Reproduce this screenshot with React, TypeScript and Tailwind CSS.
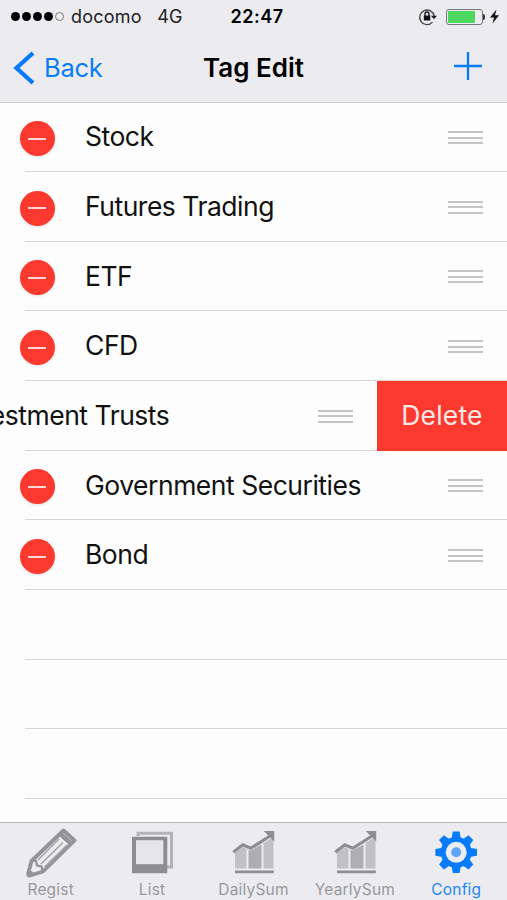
import React from 'react';
import clsx from 'clsx';

const tags = [
  { name: 'Stock' },
  { name: 'Futures Trading' },
  { name: 'ETF' },
  { name: 'CFD' },
  { name: 'Investment Trusts', swiped: true },
  { name: 'Government Securities' },
  { name: 'Bond' },
];

const tabs = [
  { label: 'Regist', icon: PencilIcon },
  { label: 'List', icon: PhotosIcon },
  { label: 'DailySum', icon: ChartIcon },
  { label: 'YearlySum', icon: ChartIcon },
  { label: 'Config', icon: GearIcon, active: true },
];

function PencilIcon() {
  return (
    <svg viewBox="0 0 52 52" className="w-[52px] h-[52px]" fill="none">
      <path d="M38.500 3.500 49.500 13.500 18 44.500 5 48.500Q3 49 3.200 46.500L6.500 34Z" fill="#ededf0" stroke="#949496" strokeWidth="3.800" strokeLinejoin="round" />
      <path d="m35.500 7 11 10" stroke="#949496" strokeWidth="4.500" />
      <path d="m7.500 33 3.500 1 1 4.500 4.500 1 1 4.500" stroke="#949496" strokeWidth="2.200" />
      <path d="M13 33 34 12M16 37 38 15.500M19.500 40 42 18" stroke="#a6a6a8" strokeWidth="1.600" />
      <path d="m4 42 7 6-6 2q-3 0-2.500-3z" fill="#949496" />
    </svg>
  );
}

function PhotosIcon() {
  return (
    <svg viewBox="0 0 52 52" className="w-[52px] h-[52px]" fill="none">
      <path d="M12 9V6.200h33.500v33.800H41" stroke="#b3b3b5" strokeWidth="3" />
      <path d="M6 9.700h35.300v36.600H6z" fill="#8e8e90" />
      <path d="M10 13.200h27.300v24H10z" fill="#e6e6e9" />
    </svg>
  );
}

function ChartIcon() {
  return (
    <svg viewBox="0 0 52 52" className="w-[52px] h-[52px]" fill="none">
      <path d="m8 26 8-6 3.500 2v19.500H8z" fill="#c1c1c3" />
      <path d="m21.500 23 2.500.5 10.500-6v24h-13z" fill="#aeaeb0" />
      <path d="m36.500 16 10-6v31.500h-10z" fill="#c1c1c3" />
      <path d="m6.300 25.300 9.500-7.500 8 3.500L43 9" stroke="#8e8e90" strokeWidth="3.200" />
      <path d="M38.500 4.700h8v8z" fill="#8e8e90" stroke="#8e8e90" strokeWidth="1.500" />
      <path d="M8 44.900h38.800" stroke="#8e8e90" strokeWidth="2.800" />
    </svg>
  );
}

function GearIcon() {
  return (
    <svg viewBox="0 0 52 52" className="w-[52px] h-[52px]">
      <g fill="#087bfb">
        {[0, 45, 90, 135].map((angle) => (
          <path key={angle} d="M22.800 4.500h6.800l1 6v29.600l-1 6h-6.800l-1-6V10.500z" transform={`rotate(${angle} 26.2 25.3)`} />
        ))}
        <circle cx="26.2" cy="25.300" r="15.500" />
      </g>
      <circle cx="26.2" cy="25.300" r="10.500" fill="#ededf1" />
      <circle cx="26.2" cy="25.300" r="5" fill="#5ca4f5" />
    </svg>
  );
}

function StatusBar() {
  return (
    <div className="relative flex h-[33px] items-center text-[18px] leading-none text-[#222]">
      <div className="flex items-center gap-[2px] pl-[11px]">
        {[1, 2, 3, 4].map((n) => (
          <span key={n} className="size-[9px] rounded-full bg-black" />
        ))}
        <span className="size-[9px] rounded-full border border-[#777]" />
      </div>
      <span className="ml-[7px] tracking-[0.2px]">docomo</span>
      <span className="ml-[15.500px] tracking-[0.3px]">4G</span>
      <span className="absolute left-[230.500px] font-semibold tracking-[0.5px] text-black">22:47</span>
      <div className="ml-auto flex items-center pr-[8px]">
        <svg viewBox="0 0 20 18" className="mr-[8px] h-[18px] w-[20px]" fill="none">
          <path d="M14.500 14.100A7.300 7.300 0 1 1 16.200 8" stroke="#444" strokeWidth="1.400" />
          <path d="M13 7.700h6l-3 3.500z" fill="#222" />
          <path d="M5.800 7.500h6.500v5H5.800z" fill="#111" />
          <path d="M7 8V6a2 2 0 0 1 4 0v2" stroke="#111" strokeWidth="1.300" />
        </svg>
        <div className="h-[16px] w-[37px] rounded-[3px] border-[1.500px] border-[#777] p-px">
          <div className="h-full w-[27px] rounded-[1px] bg-[#4cd760]" />
        </div>
        <span className="h-[6px] w-[2px] rounded-r-sm bg-[#333]" />
        <svg viewBox="0 0 9 15" className="ml-[5px] h-[15px] w-[9px]">
          <path d="M6.500.5 0 8.500h4L2.500 14.500 9 6.200H5z" fill="#111" />
        </svg>
      </div>
    </div>
  );
}

function Header() {
  return (
    <header className="h-[102.500px] shrink-0 border-b border-[#cdcdd0] bg-[#ececf0]">
      <StatusBar />
      <div className="grid h-[69px] grid-cols-3 items-center text-[25.500px]">
        <button className="flex items-center pl-[13px] text-[#087bfb]">
          <svg viewBox="0 0 22 34" className="mr-[9px] h-[34px] w-[22px]" fill="none">
            <path d="M20 2 3.500 17 20 32" stroke="currentColor" strokeWidth="4.300" />
          </svg>
          <span className="pt-px tracking-[-0.3px]">Back</span>
        </button>
        <h1 className="whitespace-nowrap text-center text-[26px] font-semibold">Tag Edit</h1>
        <button className="justify-self-end pr-[25px] pb-[4px] text-[#087bfb]">
          <svg viewBox="0 0 28 28" className="size-[28px]">
            <path d="M14 0v28M0 14h28" stroke="currentColor" strokeWidth="2.300" />
          </svg>
        </button>
      </div>
    </header>
  );
}

function DragHandle() {
  return (
    <div className="flex w-[35px] shrink-0 flex-col gap-[3.500px] pt-px">
      <span className="h-[2px] bg-[#c5c5c8]" />
      <span className="h-[2px] bg-[#c5c5c8]" />
      <span className="h-[2px] bg-[#c5c5c8]" />
    </div>
  );
}

function TagRow({ tag }: { tag: (typeof tags)[number] }) {
  return (
    <li className="flex h-[69.700px]">
      <div className={clsx('flex w-[507px] shrink-0', tag.swiped && '-ml-[130.500px]')}>
        <div className="flex w-[85px] shrink-0 items-center pl-[19.500px] pt-[3px]">
          <div className="flex size-[35px] items-center justify-center rounded-full bg-[#fc392e] shadow-[0_1px_3px_rgba(0,0,0,0.12)]">
            <span className="h-[2px] w-[18px] bg-[#ffd8d5]" />
          </div>
        </div>
        <div className="flex flex-1 items-center justify-between pr-[24px]">
          <span className="whitespace-nowrap pb-px text-[26.500px] leading-none tracking-[-0.480px] text-[#111]">
            {tag.name}
          </span>
          <DragHandle />
        </div>
      </div>
      {tag.swiped && (
        <button className="z-10 flex w-[131px] shrink-0 items-center justify-center bg-[#fc392e] text-[26.500px] tracking-[0.2px] text-[#ffe9e7]">
          Delete
        </button>
      )}
    </li>
  );
}

export default function App() {
  return (
    <div className="flex h-[900px] w-[507px] flex-col overflow-hidden bg-[#fdfdfd] font-['Inter',sans-serif]">
      <Header />
      <ul className="-mt-[0.300px] min-h-0 flex-1 overflow-hidden">
        {tags.map((tag) => (
          <React.Fragment key={tag.name}>
            <TagRow tag={tag} />
            <li className="-mt-px ml-[25px] h-px bg-[#d6d6d9]" />
          </React.Fragment>
        ))}
        {[8, 9, 10].map((n) => (
          <li key={n} className="ml-[25px] h-[69.700px] border-b border-[#d6d6d9]" />
        ))}
      </ul>
      <nav className="grid h-[78px] shrink-0 grid-cols-5 border-t border-[#b9b9bc] bg-[#ececf0]">
        {tabs.map((tab) => (
          <button
            key={tab.label}
            className={clsx(
              'flex flex-col items-center pt-[4px] text-[15.500px] leading-none',
              tab.active ? 'text-[#2186f5]' : 'text-[#98989b]',
            )}
          >
            <tab.icon />
            <span className="mt-[3px] tracking-[0.2px]">{tab.label}</span>
          </button>
        ))}
      </nav>
    </div>
  );
}
